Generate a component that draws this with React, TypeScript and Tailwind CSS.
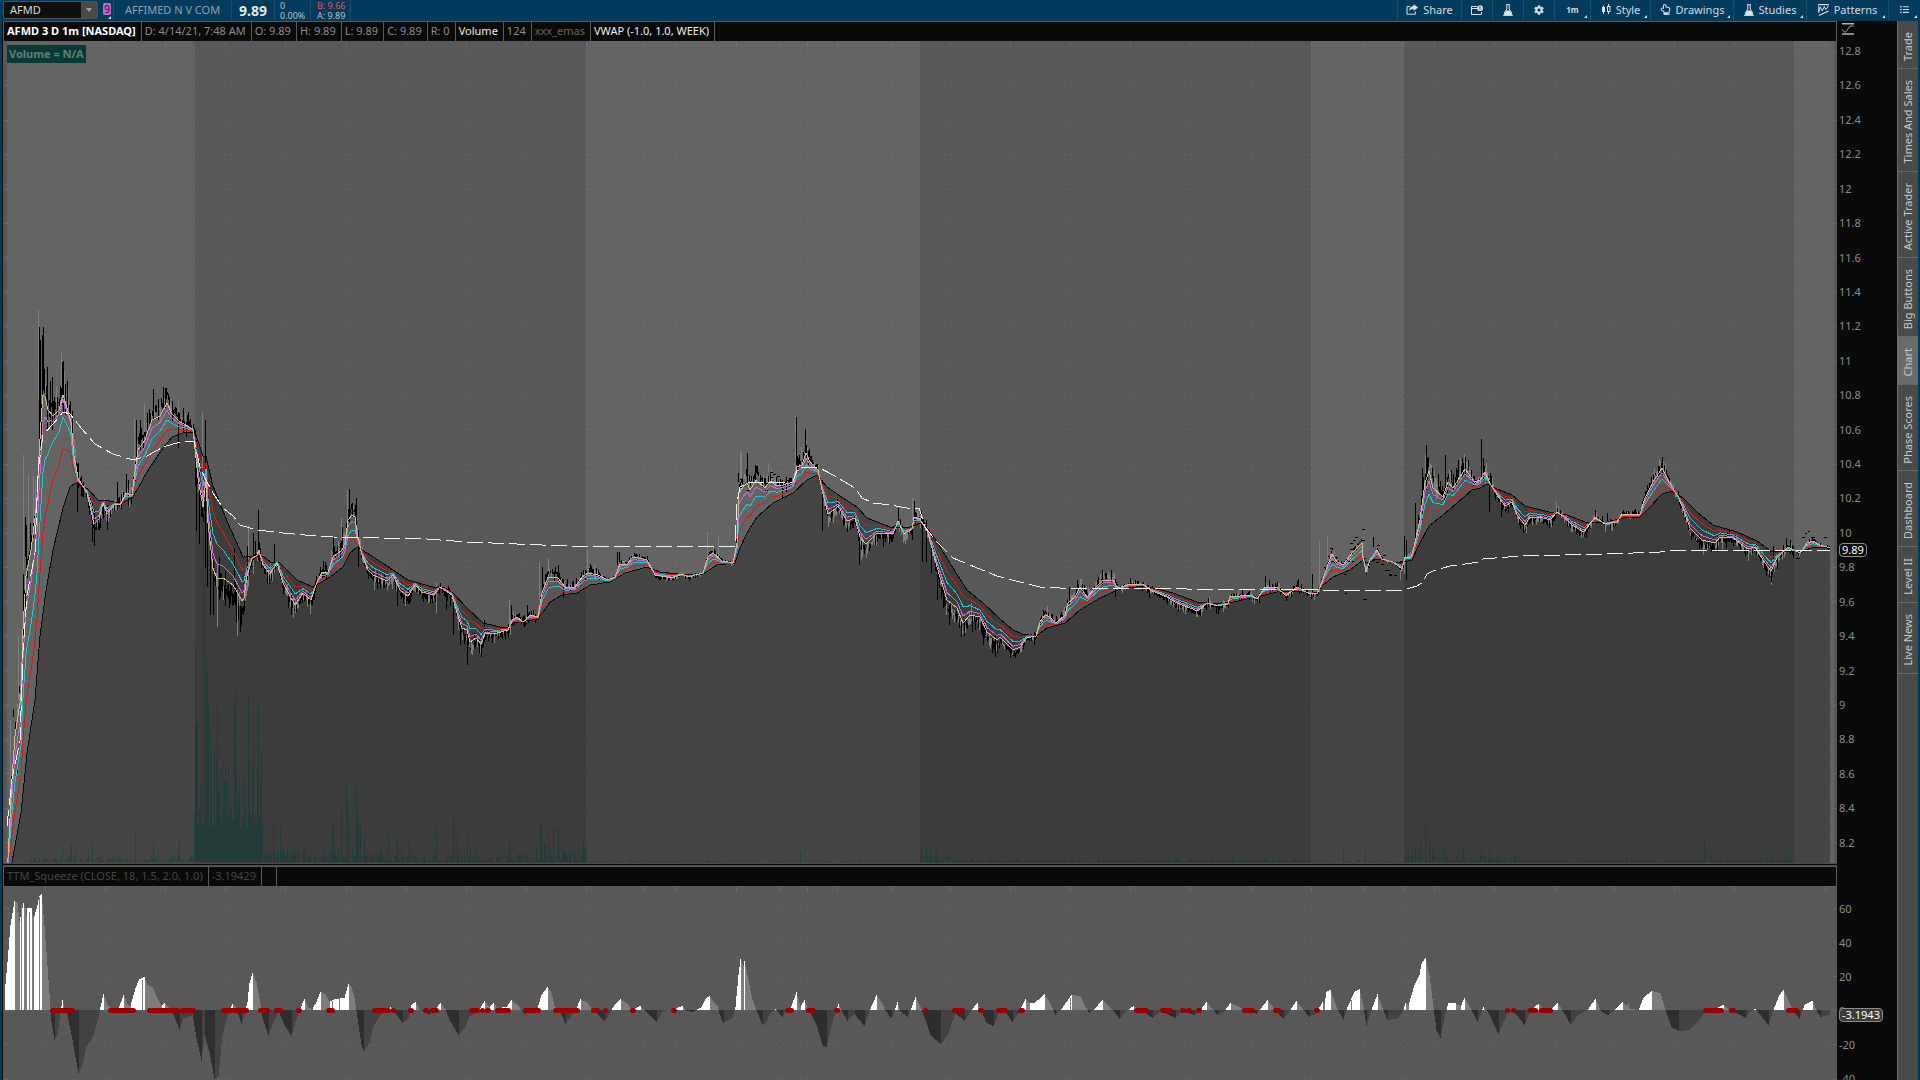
import React, { useState } from "react";
import { FaCog, FaRegHandPointUp, FaListUl } from "react-icons/fa";

type Pt = [number, number];

const TABS = [
  "Trade",
  "Times And Sales",
  "Active Trader",
  "Big Buttons",
  "Chart",
  "Phase Scores",
  "Dashboard",
  "Level II",
  "Live News",
];

// x, y pairs in chart space
const FAST =
  "7 862 8 858 12 779 15 736 21 696 23 629 26 576 31 550 33 535 37 501 39 456 41 422 43 395 45 397 48 410 53 416 59 410 63 395 67 408 71 422 74 456 78 478 87 493 94 524 99 519 103 503 107 514 115 504 120 505 126 493 132 495 135 471 138 450 145 440 152 420 160 416 167 403 172 414 180 422 193 429 198 478 203 507 206 478 208 523 213 568 217 579 223 578 233 585 242 601 244 598 247 576 252 559 257 555 259 550 263 565 270 574 277 563 283 583 295 605 303 593 311 600 317 582 322 572 328 572 333 557 342 550 345 543 348 520 352 515 355 517 357 532 362 555 368 570 373 575 387 581 393 575 400 590 408 596 415 585 422 592 434 595 440 587 452 595 457 613 462 628 467 630 470 642 476 638 481 644 485 634 497 633 508 630 512 620 517 617 523 622 530 615 538 617 542 593 548 577 558 578 565 587 575 587 582 577 588 573 598 575 608 580 615 577 620 564 627 564 633 557 647 560 655 575 672 578 682 574 688 577 703 573 708 557 713 553 722 561 733 563 737 543 739 493 743 487 747 483 750 490 756 480 765 488 770 481 777 486 783 485 793 482 797 467 802 465 806 453 810 462 818 470 822 490 828 514 835 509 838 506 847 521 855 518 860 537 866 544 877 533 893 534 898 521 904 534 912 529 914 517 920 519 928 533 937 567 947 600 957 608 963 623 970 615 980 617 987 632 997 640 1000 637 1013 650 1020 647 1027 638 1036 636 1040 622 1045 615 1050 617 1056 623 1065 615 1068 603 1075 597 1080 587 1087 597 1095 588 1103 580 1113 580 1118 588 1130 584 1143 584 1150 590 1167 597 1177 603 1198 611 1207 603 1217 606 1228 604 1230 597 1250 595 1257 599 1265 587 1277 587 1286 596 1297 587 1308 593 1317 594 1322 582 1327 567 1332 554 1337 562 1343 565 1353 552 1362 543 1363 557 1366 572 1370 560 1377 550 1382 559 1393 562 1402 569 1405 557 1411 557 1414 547 1420 520 1425 483 1429 471 1433 488 1443 497 1448 482 1453 488 1460 477 1465 469 1475 482 1480 480 1485 472 1490 483 1497 495 1505 506 1512 502 1517 515 1525 525 1530 517 1543 518 1550 520 1557 512 1563 516 1572 525 1584 532 1595 517 1605 524 1617 522 1622 514 1640 514 1645 498 1653 482 1662 468 1668 480 1677 495 1683 508 1690 528 1702 540 1715 543 1720 537 1733 538 1748 549 1755 547 1765 563 1771 571 1777 558 1788 547 1800 553 1807 543 1813 541 1820 545 1830 548";

const SLOW =
  "7 880 12 862 21 813 27 753 35 700 40 636 46 591 53 550 63 508 70 487 75 483 88 489 98 500 110 501 121 504 133 497 147 472 163 448 172 437 183 433 195 432 203 456 206 456 213 486 227 521 243 557 263 556 271 562 279 562 297 580 313 587 320 583 330 577 343 567 350 553 357 547 367 553 387 566 408 580 433 587 445 588 453 593 467 608 483 623 500 627 508 628 513 623 538 619 550 602 562 595 577 593 590 585 610 582 625 573 647 567 660 572 687 575 703 574 717 565 735 563 740 548 747 533 757 517 773 503 793 493 807 480 817 475 827 487 843 498 857 507 867 518 890 527 910 527 920 523 928 529 937 542 953 568 967 590 983 603 1000 619 1013 630 1022 634 1036 636 1047 628 1065 623 1080 610 1100 598 1120 589 1143 586 1153 588 1173 593 1197 602 1217 604 1233 602 1257 597 1277 592 1293 591 1317 593 1323 585 1333 577 1350 570 1363 560 1367 563 1377 559 1400 563 1412 560 1418 547 1429 526 1443 515 1457 503 1472 490 1480 488 1487 484 1497 489 1512 495 1525 506 1553 513 1567 515 1585 522 1607 522 1623 518 1640 517 1650 507 1662 494 1672 491 1683 498 1697 512 1713 525 1737 532 1757 541 1772 552 1790 551 1802 552 1813 547 1830 547";

const VWAP =
  "7 826 12 779 20 741 23 651 27 595 35 553 38 471 43 435 53 424 63 412 70 414 82 429 95 444 113 454 133 460 147 456 163 447 180 442 194 441 200 467 205 478 213 493 223 508 233 516 240 525 257 530 283 533 305 535 333 537 427 539 467 542 567 546 735 546 737 503 740 487 747 483 793 482 798 468 818 467 833 475 855 488 862 498 873 503 890 505 907 508 919 508 925 527 937 542 953 558 970 565 997 576 1020 582 1040 587 1060 588 1150 588 1187 589 1310 589 1327 591 1403 590 1417 586 1423 582 1427 574 1433 571 1450 566 1480 562 1483 559 1520 556 1563 555 1607 554 1660 552 1680 550 1830 550";

const SQUEEZE =
  "4 0 5 26 7 48 10 85 14 109 17 107 19 88 23 107 26 95 27 102 31 102 33 90 37 105 39 114 41 116 44 85 48 30 50 2 51 -12 54 -30 57 -25 60 -3 62 10 64 2 67 -5 71 -25 78 -63 82 -55 86 -36 92 -27 98 -8 100 3 103 16 107 5 111 1 118 1 123 15 127 6 130 4 135 22 139 31 144 33 147 25 152 23 157 12 161 4 164 7 169 2 173 -5 179 -19 183 -8 187 -8 192 -4 196 -28 201 -51 204 -25 209 -42 214 -69 218 -66 222 -25 227 -6 232 6 235 4 238 -5 241 -14 244 -5 247 8 249 27 252 37 256 28 260 5 262 -8 268 -26 273 -12 278 -1 284 -15 291 -26 295 -12 299 0 304 11 308 2 312 1 316 8 320 18 325 16 329 8 335 11 344 12 348 26 351 23 354 12 357 -8 361 -35 363 -41 369 -33 373 -16 382 -2 390 3 394 -2 402 -13 408 -8 411 5 415 8 419 1 429 -5 435 1 440 7 445 1 449 -10 458 -25 464 -18 469 -7 478 -1 484 9 489 3 493 7 497 2 506 3 511 10 518 4 524 -4 531 -1 537 1 541 15 547 23 551 17 554 4 559 0 565 -14 571 -6 576 2 580 11 587 7 591 1 598 -5 604 -11 610 -2 614 5 620 11 627 6 631 0 640 4 645 -1 656 -12 662 -1 671 0 682 4 686 -1 693 -2 701 3 705 11 709 14 713 8 717 4 719 -4 723 -13 732 -8 735 3 738 35 740 51 743 44 744 49 748 30 752 10 756 0 762 -15 765 -13 769 -4 775 1 782 -7 785 -1 790 1 796 18 800 3 804 10 807 2 811 -5 816 -15 822 -35 826 -37 830 -20 835 -2 838 6 842 -2 847 -11 854 -4 864 -16 869 -1 876 15 881 8 885 -1 891 -8 894 -1 897 8 900 -1 907 -7 911 2 915 13 921 1 925 -10 930 -25 940 -34 947 -26 951 -14 955 -3 964 -11 971 0 977 7 981 -1 986 -13 993 -16 999 -2 1005 -2 1012 -12 1019 -1 1025 11 1029 7 1034 7 1040 12 1044 16 1049 8 1055 -5 1061 1 1071 15 1080 14 1085 3 1089 -3 1094 1 1102 10 1109 3 1113 -1 1119 -9 1126 -1 1133 4 1140 0 1152 -8 1160 -1 1175 -8 1181 -1 1194 -5 1200 0 1206 8 1213 0 1217 -5 1224 -1 1230 7 1242 1 1251 -1 1256 -4 1260 1 1267 10 1274 1 1283 -9 1290 0 1296 9 1303 0 1309 -7 1316 -3 1322 8 1324 6 1326 18 1330 20 1336 3 1343 -10 1347 3 1354 18 1359 21 1363 3 1366 -16 1371 0 1377 16 1382 2 1387 -10 1398 -8 1403 0 1405 7 1408 5 1414 25 1419 35 1421 46 1425 52 1429 35 1433 3 1436 -20 1440 -28 1445 -3 1448 7 1455 7 1460 3 1464 12 1469 4 1477 -12 1483 3 1487 -1 1498 -24 1507 -3 1513 -1 1524 -15 1530 0 1538 6 1544 -1 1551 1 1557 7 1563 -2 1570 -14 1578 -5 1587 0 1595 11 1601 -2 1608 -5 1615 1 1622 8 1630 1 1638 0 1643 12 1651 19 1660 17 1665 0 1671 -17 1678 -21 1689 -20 1698 -11 1704 -2 1715 1 1723 5 1730 0 1745 -8 1750 -1 1755 1 1760 -5 1768 -15 1773 0 1779 15 1783 20 1791 3 1799 -9 1804 5 1812 9 1816 0 1820 -7 1829 -5";

// stretches where the squeeze is on
const SQUEEZE_ON =
  "50 75 108 136 147 180 180 196 221 249 258 270 274 283 296 302 326 335 372 391 391 396 408 414 423 429 430 439 469 480 480 485 485 491 495 511 523 541 553 580 591 600 603 608 630 636 671 677 785 794 806 816 834 840 923 928 952 965 978 984 996 1008 1018 1025 1134 1149 1160 1173 1180 1186 1186 1192 1196 1202 1242 1255 1273 1281 1314 1320 1505 1510 1511 1516 1528 1538 1539 1553 1703 1724 1729 1736 1786 1799";

// x, high, low, up (1) or down (0)
const WICKS =
  "39 327 450 0 40 340 430 0 43 327 390 0 42 335 395 0 38 310 400 1 47 367 430 0 50 381 425 0 52 377 430 0 63 361 412 0 62 362 405 0 65 384 415 0 61 352 410 1 23 455 570 1 25 517 557 0 26 525 557 0 30 523 550 0 28 474 540 1 33 476 540 1 35 480 530 1 23 574 617 0 19 686 693 0 13 709 717 0 17 766 773 0 18 636 700 1 10 720 800 1 77 470 512 0 92 500 542 0 94 510 546 0 107 505 530 0 117 482 510 0 126 474 495 0 128 480 506 0 136 420 460 0 134 418 480 1 140 420 450 0 144 403 440 1 153 389 420 0 158 399 420 0 163 387 410 0 165 388 408 0 178 412 448 0 183 408 432 0 195 430 486 0 196 440 531 0 199 460 544 0 202 412 500 1 205 420 568 0 207 500 587 0 210 540 615 0 213 560 615 0 217 570 627 1 219 557 600 0 225 570 606 0 234 548 590 0 236 585 623 0 237 590 636 1 247 546 580 0 248 525 570 1 253 533 560 0 258 510 560 0 274 544 565 0 291 590 615 0 349 489 515 0 347 490 520 1 356 498 530 0 342 527 545 0 341 518 545 1 333 538 555 0 358 530 567 0 397 585 606 0 408 590 604 0 436 595 613 1 446 590 610 0 453 600 635 0 460 625 645 0 467 630 665 0 479 640 653 0 484 620 640 0 509 600 628 1 511 605 625 0 527 605 618 0 539 562 600 1 542 567 595 0 548 558 580 1 558 565 580 0 563 585 598 0 587 550 575 1 596 568 576 0 617 552 565 0 619 552 562 0 707 532 556 1 718 536 558 1 740 451 490 1 741 453 490 1 738 473 482 0 747 453 485 0 755 465 480 0 768 463 472 1 782 480 499 0 796 417 465 0 795 415 460 1 801 447 465 1 805 429 455 0 806 445 460 0 822 480 531 0 837 497 510 0 859 530 565 0 861 535 560 1 898 508 525 0 914 501 520 0 912 498 520 1 922 520 562 0 926 530 562 0 931 535 573 0 937 560 600 0 943 590 608 0 949 605 625 0 964 620 636 0 983 620 645 0 971 603 615 1 1010 645 656 0 1043 610 618 0 1069 587 605 0 1077 580 590 0 1102 570 585 0 1111 570 582 0 1115 580 597 0 1197 608 617 1 1265 576 588 0 1298 579 590 0 1312 574 592 0 1319 541 585 1 1327 536 560 1 1373 537 547 0 1404 536 560 0 1406 540 580 0 1400 565 580 1 1415 503 540 0 1422 468 520 0 1426 445 490 0 1425 455 490 1 1427 458 480 0 1436 478 500 1 1445 455 490 0 1460 458 480 1 1465 460 475 0 1481 439 480 0 1483 458 480 0 1489 480 512 0 1501 500 517 0 1523 520 533 0 1556 502 512 1 1607 513 522 0 1659 459 470 1 1662 462 475 0 1699 535 549 0 1703 540 555 1 1771 570 582 0 1773 546 565 0 1786 538 548 0";

const VOLUME_SPIKES =
  "195 216 196 139 197 139 203 390 205 300 206 203 207 190 208 160 210 135 217 160 219 90 225 97 228 95 235 173 234 155 236 96 244 82 248 167 253 120 257 95 258 157 260 80 262 40 273 38 280 35 332 35 333 37 341 58 346 79 347 62 349 42 356 75 357 50 358 43 360 37 364 20 388 28 397 23 409 22 436 36 453 45 457 27 467 32 470 15 509 20 540 38 541 38 548 29 553 33 558 35 583 22 586 20 800 10 921 16 926 14 930 12 936 10 1044 7 1415 16 1420 22 1425 40 1429 25 1433 18 1444 16 1463 14 1481 12 1489 10 1704 19 1711 8 1772 8 1788 9 135 28 153 25 71 18 62 16 92 20 179 22 1343 14 1365 10";

const GRID_X = [
  45, 105, 165, 225, 285, 346, 406, 466, 526, 586, 643, 676, 736, 780, 807, 837, 892, 950, 1010, 1070,
  1130, 1190, 1251, 1311, 1363, 1403, 1434, 1494, 1555, 1614, 1674, 1734, 1825,
];

const BANDS: Pt[] = [
  [7, 195],
  [586, 920],
  [1311, 1404],
  [1794, 1834],
];

const PRICES = Array.from({ length: 24 }, (_, i) => 12.8 - i * 0.2);

const nums = (s: string) => s.split(" ").map(Number);

const group = (s: string, n: number) => {
  const all = nums(s);
  const out: number[][] = [];
  for (let i = 0; i < all.length; i += n) out.push(all.slice(i, i + n));
  return out;
};

const at = (pts: number[][], x: number) => {
  for (let i = 1; i < pts.length; i++) {
    const [x0, y0] = pts[i - 1];
    const [x1, y1] = pts[i];
    if (x <= x1) return y0 + ((x - x0) / (x1 - x0)) * (y1 - y0);
  }
  return pts[pts.length - 1][1];
};

const random = (seed: number) => {
  let s = seed;
  return () => {
    s = (s * 16807) % 2147483647;
    return s / 2147483647;
  };
};

const priceY = (p: number) => 51 + (12.8 - p) * 172;

const fastPts = group(FAST, 2);
const slowPts = group(SLOW, 2);

// the averages bunch up behind the first spike
const BUNCHING = [
  [0, 1],
  [40, 1],
  [46, 1.4],
  [53, 1.9],
  [70, 1.9],
  [78, 1],
  [1900, 1],
];

const blend = (k: number) => {
  let d = "";
  for (let x = 7; x <= 1830; x++) {
    const f = at(fastPts, x);
    const y = f + (at(slowPts, x) - f) * Math.pow(k, at(BUNCHING, x));
    d += `${x === 7 ? "M" : "L"}${x} ${y.toFixed(1)}`;
  }
  return d;
};

const amplitude = (x: number) => {
  if (x < 30) return 16;
  if (x < 75) return 15;
  if (x < 200) return 11;
  if (x < 260) return 17;
  if (x < 350) return 9;
  if (x < 480) return 8;
  if (x < 600) return 6;
  if (x < 735) return 2;
  if (x < 920) return 7;
  if (x < 1000) return 9;
  if (x < 1320) return 5;
  if (x < 1404) return 1;
  if (x < 1500) return 10;
  if (x < 1700) return 5;
  if (x < 1794) return 6;
  return 2;
};

const candles = () => {
  const rnd = random(77);
  let up = "";
  let down = "";
  let rising = true;
  for (let x = 8; x < 1830; x++) {
    const f = at(fastPts, x);
    const lead = f - at(slowPts, x);
    const mid = f + Math.max(-9, Math.min(9, lead * 0.22));
    const a = amplitude(x);
    const top = mid - a * rnd() * rnd() * 1.6;
    const bottom = mid + a * rnd() * rnd() * 1.6;
    const bar = `M${x}.5 ${top.toFixed(0)}V${(bottom + 1).toFixed(0)}`;
    if (rnd() < (rising ? 0.55 : 0.35)) rising = !rising;
    if (rising) up += bar;
    else down += bar;
  }
  group(WICKS, 4).forEach(([x, hi, lo, isUp]) => {
    const bar = `M${x}.5 ${hi}V${lo}`;
    if (isUp) up += bar;
    else down += bar;
  });
  // thin extended-hours prints
  for (let i = 0; i < 34; i++) {
    const x = 1320 + Math.floor(rnd() * 82);
    down += `M${x} ${Math.floor(at(fastPts, x) - 14 + rnd() * 30)}.5h3`;
  }
  for (let i = 0; i < 12; i++) {
    const x = 740 + Math.floor(rnd() * 55);
    down += `M${x} ${Math.floor(472 + rnd() * 24)}.5h3`;
  }
  down += "M1802 537.5h3M1808 531.5h2M1811 537.5h4M1824 537.5h3M1796 558.5h4M1805 533.5h2M1345 593.5h2M1363 599.5h4";
  return { up, down };
};

const volumeLevel = (x: number) => {
  if (x < 194) return 9;
  if (x < 262) return 85;
  if (x < 290) return 22;
  if (x < 330) return 18;
  if (x < 365) return 26;
  if (x < 385) return 14;
  if (x < 536) return 11;
  if (x < 586) return 19;
  if (x < 920) return 2;
  if (x < 950) return 11;
  if (x < 1311) return 4;
  if (x < 1404) return 2;
  if (x < 1460) return 13;
  if (x < 1530) return 8;
  if (x < 1794) return 4;
  return 1;
};

const volume = () => {
  const rnd = random(4211);
  let d = "";
  for (let x = 30; x < 1830; x++) {
    const level = volumeLevel(x);
    const floor = x >= 194 && x < 262 ? 32 : 0;
    const h = floor + level * rnd() * rnd() + 0.4;
    if (h >= 1) d += `M${x}.5 862v-${h.toFixed(0)}`;
  }
  group(VOLUME_SPIKES, 2).forEach(([x, h]) => {
    d += `M${x}.5 862v-${h}`;
  });
  return d;
};

const histogram = () => {
  const pts = group(SQUEEZE, 2);
  const out = { rise: "", fade: "", drop: "", lift: "" };
  let prev = 0;
  for (let x = 5; x < 1830; x++) {
    const v = at(pts, x);
    const bar = `M${x}.5 1010v${(-v).toFixed(0)}`;
    if (v >= 0 && v >= prev) out.rise += bar;
    else if (v >= 0) out.fade += bar;
    else if (v < prev) out.drop += bar;
    else out.lift += bar;
    prev = v;
  }
  return out;
};

const bars = candles();
const volumePath = volume();
const hist = histogram();
const slowPath = blend(1);

const PriceChart: React.FC = () => (
  <svg
    className="block h-full w-full"
    viewBox="3 41 1834 822"
    preserveAspectRatio="none"
    role="img"
    aria-label="AFMD price"
  >
    <rect x="3" y="41" width="1834" height="822" fill="#585858" />
    {BANDS.map(([a, b]) => (
      <rect key={a} x={a} y="41" width={b - a} height="822" fill="#646464" />
    ))}
    <g stroke="#fff" strokeOpacity="0.09" shapeRendering="crispEdges">
      {GRID_X.map((x) => (
        <path key={x} d={`M${x}.5 42v5`} />
      ))}
      {GRID_X.map((x) => (
        <path key={`d${x}`} d={`M${x}.5 51V862`} strokeDasharray="1 5" />
      ))}
      {PRICES.map((p) => (
        <path key={p} d={`M8 ${Math.round(priceY(p))}.5H1830`} strokeDasharray="1 5" />
      ))}
      {PRICES.map((p) => (
        <path key={`t${p}`} d={`M1833 ${Math.round(priceY(p))}.5h4M4 ${Math.round(priceY(p))}.5h4`} />
      ))}
    </g>
    <path d={`${slowPath}V863H7Z`} fill="#000" fillOpacity="0.31" />
    <path d={volumePath} stroke="#003c38" strokeOpacity="0.42" fill="none" shapeRendering="crispEdges" />
    <g fill="none" shapeRendering="crispEdges">
      <path d={bars.up} stroke="#808080" />
      <path d={bars.down} stroke="#000" />
    </g>
    <g fill="none" strokeLinejoin="round" shapeRendering="crispEdges">
      <path d={slowPath} stroke="#0a0a0a" />
      <path d={blend(0.68)} stroke="#d01c1c" />
      <path d={blend(0.42)} stroke="#1fc7c7" />
      <path d={blend(0.18)} stroke="#cf66d4" />
      <path d={blend(0)} stroke="#cdbb95" />
      <path
        d={`M${group(VWAP, 2).map((p) => p.join(" ")).join("L")}`}
        stroke="#f2f2f2"
        strokeDasharray="16 5"
      />
    </g>
  </svg>
);

const SqueezeChart: React.FC = () => (
  <svg
    className="block h-full w-full"
    viewBox="3 886 1834 194"
    preserveAspectRatio="none"
    role="img"
    aria-label="TTM squeeze"
  >
    <rect x="3" y="886" width="1834" height="194" fill="#585858" />
    <g stroke="#fff" strokeOpacity="0.09" shapeRendering="crispEdges">
      {GRID_X.map((x) => (
        <path key={x} d={`M${x}.5 887v5`} />
      ))}
      {GRID_X.map((x) => (
        <path key={`d${x}`} d={`M${x}.5 897V1080`} strokeDasharray="1 5" />
      ))}
      {[908, 942, 976, 1010, 1044, 1079].map((y) => (
        <path key={y} d={`M8 ${y}.5H1830`} strokeDasharray="1 5" />
      ))}
      {[908, 942, 976, 1010, 1044, 1079].map((y) => (
        <path key={`t${y}`} d={`M1833 ${y}.5h4M4 ${y}.5h4`} />
      ))}
    </g>
    <g fill="none" shapeRendering="crispEdges">
      <path d={hist.rise} stroke="#fff" />
      <path d={hist.fade} stroke="#7d7d7d" />
      <path d={hist.drop} stroke="#2e2e2e" />
      <path d={hist.lift} stroke="#424242" />
      <path
        d="M18.5 1010V912M21.5 1010V905M25.5 1010V908M29.5 1010V912M33.5 1010V918M39.5 1010V897M142.500 1010V980M149.500 1010V987M153.500 1010V990M254.500 1010V978M349.500 1010V985M332.500 1010V1001M339.500 1010V998M548.500 1010V988"
        stroke="#7d7d7d"
      />
      <path d="M1070.5 1010V998M1074.5 1010V998M1077.5 1010V998M1628.500 1010V1003M1653.500 1010V993M1351.500 1010V1000" stroke="#7d7d7d" />
    </g>
    <g fill="#9b0000">
      {group(SQUEEZE_ON, 2).map(([a, b]) => (
        <rect key={a} x={a} y="1008" width={b - a} height="5" rx="2.5" />
      ))}
    </g>
  </svg>
);

const Flask = () => (
  <svg width="10" height="12" viewBox="0 0 10 12" fill="none" stroke="#dce4e9">
    <path d="M3 .7h4M3.8 1v4L1.2 9.2M6.2 1v4l2.6 4.2" />
    <path d="M3.3 6.4h3.4L9 9.6v1.9H1V9.6Z" fill="#dce4e9" stroke="none" />
    <path d="M0 11.3h10" />
  </svg>
);

const ShareIcon = () => (
  <svg width="12" height="11" viewBox="0 0 12 11" fill="none" stroke="#dce4e9">
    <path d="M4 2.5H1v7.7h8.3V7.5" />
    <path d="M7.5 0 12 3.5 7.5 7V5C5.5 4.9 4 5.5 2.9 7.5 3 4.3 4.6 2.3 7.5 2Z" fill="#dce4e9" stroke="none" />
  </svg>
);

const CardIcon = () => (
  <svg width="12" height="10" viewBox="0 0 12 10" fill="none" stroke="#dce4e9">
    <path d="M6 1.5H.5v8h10V7" />
    <path d="M1 3.5h5" />
    <circle cx="9" cy="3.2" r="2.9" fill="#dce4e9" stroke="none" />
    <path d="M9 1.3v2.4M9 4.4v.9" stroke="#023b5b" />
  </svg>
);

const StyleIcon = () => (
  <svg width="10" height="11" viewBox="0 0 10 11" fill="none" stroke="#dce4e9">
    <path d="M2.5 1.5v8.5M7.5 0v2M7.5 8v2" />
    <rect x="1" y="3" width="3" height="5" fill="#dce4e9" stroke="none" />
    <rect x="6.5" y="2.5" width="2.5" height="5" />
  </svg>
);

const PatternIcon = () => (
  <svg width="11" height="12" viewBox="0 0 11 12" fill="none" stroke="#dce4e9">
    <path d="M0 .7h11M1 11.5 10.5 7" strokeWidth="1.2" />
    <path d="m.8 7.5 1.5-4.5 2 4 2-4.5 1.5 3L10.5 2" />
    <path d="M.8 2v7" />
  </svg>
);

const Corner = () => (
  <svg className="absolute right-[3px] bottom-[3px]" width="3" height="3" viewBox="0 0 3 3">
    <path d="M3 0v3H0Z" fill="#dce4e9" />
  </svg>
);

const ToolButton: React.FC<{
  label: string;
  width: string;
  icon?: React.ReactNode;
  text?: string;
  menu?: boolean;
}> = ({ label, width, icon, text, menu }) => (
  <button
    aria-label={label}
    className={`relative flex h-full shrink-0 items-center justify-center gap-[5px] border-l border-[#1b4e6c] pb-[2px] text-[#d3dbe0] ${width}`}
  >
    {icon}
    {text && <span>{text}</span>}
    {menu && <Corner />}
  </button>
);

const Cell: React.FC<{ children?: React.ReactNode; tone?: string }> = ({ children, tone = "text-[#8c8c8c]" }) => (
  <span
    className={`flex h-full items-center border-r border-[#5a5a5a] pr-[5px] pb-[2px] pl-[3px] whitespace-nowrap ${tone}`}
  >
    {children}
  </span>
);

const TopBar: React.FC = () => {
  const [symbol, setSymbol] = useState("AFMD");
  return (
    <header className="flex h-[21px] shrink-0 items-stretch justify-between bg-[#023b5b] text-[11px] leading-[14px]">
      <div className="flex items-stretch">
        <div className="mt-px mb-[2px] ml-[3px] flex w-[95px] rounded-[2px] border border-[#505050] bg-[#101010]">
          <input
            aria-label="Symbol"
            value={symbol}
            onChange={(e) => setSymbol(e.target.value)}
            className="w-full min-w-0 flex-1 bg-transparent pl-[6px] text-[#dadada] outline-none"
          />
          <button aria-label="Recent symbols" className="flex w-[16px] items-center justify-center bg-[#4a4a4a]">
            <svg width="6" height="4" viewBox="0 0 6 4">
              <path d="M0 0h6L3 4Z" fill="#a0a0a0" />
            </svg>
          </button>
        </div>
        <button aria-label="Link group" className="relative flex w-[15px] items-start pt-[3px] pl-[5px]">
          <span className="flex h-[12px] w-[8px] items-center justify-center rounded-[2px] bg-[#c565cf] text-[10px] leading-[12px] text-[#2b1030]">
            9
          </span>
          <svg className="absolute right-[2px] bottom-[2px]" width="3" height="3" viewBox="0 0 3 3">
            <path d="M3 0v3H0Z" fill="#dce4e9" />
          </svg>
        </button>
        <span className="flex w-[118px] items-center border-l border-[#1b4e6c] pb-[2px] pl-[11px] whitespace-nowrap text-[#8fa0ac]">
          AFFIMED N V COM
        </span>
        <span className="flex w-[43px] items-center border-l border-[#1b4e6c] pl-[7px] text-[14px] font-bold text-[#e2e6e9]">
          9.89
        </span>
        <span className="flex w-[36px] flex-col justify-center border-l border-[#1b4e6c] pl-[5px] text-[9px] leading-[10px] text-[#b9c2c8]">
          <span>0</span>
          <span>0.00%</span>
        </span>
        <span className="flex w-[41px] flex-col justify-center border-x border-[#1b4e6c] pl-[6px] text-[9px] leading-[10px] whitespace-nowrap">
          <span className="text-[#e0555f]">B: 9.66</span>
          <span className="text-[#b9c2c8]">A: 9.89</span>
        </span>
      </div>
      <nav className="flex items-stretch">
        <ToolButton label="Share" width="w-[64px]" icon={<ShareIcon />} text="Share" />
        <ToolButton label="Notes" width="w-[31px]" icon={<CardIcon />} />
        <ToolButton label="Edit studies" width="w-[31px]" icon={<Flask />} />
        <ToolButton label="Settings" width="w-[31px]" icon={<FaCog size={10} />} />
        <ToolButton
          label="Timeframe"
          width="w-[36px]"
          icon={<span className="text-[8px] font-bold">1m</span>}
          menu
        />
        <ToolButton label="Style" width="w-[60px]" icon={<StyleIcon />} text="Style" menu />
        <ToolButton label="Drawings" width="w-[83px]" icon={<FaRegHandPointUp size={11} />} text="Drawings" menu />
        <ToolButton label="Studies" width="w-[73px]" icon={<Flask />} text="Studies" menu />
        <ToolButton label="Patterns" width="w-[82px]" icon={<PatternIcon />} text="Patterns" menu />
        <ToolButton label="More" width="w-[32px]" icon={<FaListUl size={9} />} menu />
      </nav>
    </header>
  );
};

export default function App() {
  const [activeTab, setActiveTab] = useState("Chart");

  return (
    <div className="flex h-screen flex-col overflow-hidden bg-[#0a0a0a] font-['Noto_Sans','Open_Sans',sans-serif] text-[11px] leading-[14px]">
      <TopBar />
      <div className="flex min-h-0 flex-1 border-x-2 border-r-[#023b5b] border-l-[#023b5b]">
        <main className="flex min-w-0 flex-1 flex-col pl-px">
          <div className="flex h-[20px] shrink-0">
            <div className="flex min-w-0 flex-1 items-stretch border-t border-r border-l border-[#5a5a5a]">
              <Cell tone="font-bold text-white">AFMD 3 D 1m [NASDAQ]</Cell>
              <Cell>D: 4/14/21, 7:48 AM</Cell>
              <Cell>O: 9.89</Cell>
              <Cell>H: 9.89</Cell>
              <Cell>L: 9.89</Cell>
              <Cell>C: 9.89</Cell>
              <Cell>R: 0</Cell>
              <Cell tone="text-[#ededed]">Volume</Cell>
              <Cell>124</Cell>
              <Cell tone="text-[#6b6553]">xxx_emas</Cell>
              <Cell tone="text-[#ededed]">VWAP (-1.0, 1.0, WEEK)</Cell>
            </div>
            <div className="w-[60px] pt-[2px] pl-[5px]">
              <svg width="12" height="12" viewBox="0 0 12 12" fill="none" stroke="#b4b4b4">
                <path d="M0 .7h12M0 11h12" strokeWidth="1.4" />
                <path d="M.5 6.5C2 10 4 9.500 5.500 6.500S9 2.500 11.500 3" />
              </svg>
            </div>
          </div>
          <div className="flex min-h-0 flex-[822]">
            <div className="relative min-w-0 flex-1">
              <PriceChart />
              <span className="absolute top-[4px] left-[4px] bg-[#053a37] px-[2px] py-[2px] font-bold text-[#6b7a78]">
                Volume = N/A
              </span>
            </div>
            <div className="relative flex w-[60px] flex-col justify-between pt-[3px] pb-[13px] pl-[2px] text-[#8c8c8c]">
              {PRICES.map((p) => (
                <span key={p}>{Number(p.toFixed(1))}</span>
              ))}
              <span
                className="absolute left-[2px] -translate-y-1/2 rounded-[4px] border border-[#8c8c8c] bg-[#0a0a0a] px-[2px] leading-[12px] text-white"
                style={{ top: `${((priceY(9.9) - 41) / 822) * 100}%` }}
              >
                9.89
              </span>
            </div>
          </div>
          <div className="mr-[60px] h-[3px] shrink-0 border-t border-b border-[#4a4a4a]" />
          <div className="mr-[60px] flex h-[20px] shrink-0 items-stretch border-t border-r border-l border-[#5a5a5a]">
            <Cell tone="text-[#454545]">TTM_Squeeze (CLOSE, 18, 1.5, 2.0, 1.0)</Cell>
            <Cell tone="text-[#454545]">-3.19429</Cell>
            <span className="w-[15px] border-r border-[#5a5a5a]" />
          </div>
          <div className="flex min-h-0 flex-[194]">
            <div className="min-w-0 flex-1">
              <SqueezeChart />
            </div>
            <div className="relative w-[60px] overflow-hidden pt-[6px] pl-[2px] text-[#8c8c8c]">
              {[60, 40, 20, 0, -20, -40].map((v) => (
                <span key={v} className="flex h-[34px] items-center">
                  {v}
                </span>
              ))}
              <span className="absolute top-[122px] left-[2px] rounded-[4px] border border-[#8c8c8c] bg-[#3a3a3a] px-[2px] leading-[12px] text-white">
                -3.1943
              </span>
            </div>
          </div>
        </main>
        <aside className="flex w-[21px] shrink-0 flex-col border-l border-[#6a6a6a] bg-[#4a4a4a]">
          {TABS.map((tab) => (
            <button
              key={tab}
              onClick={() => setActiveTab(tab)}
              className={`flex items-center justify-center border-b border-[#666] pt-[11px] pb-[7px] text-[#c9c9c9] ${
                tab === activeTab ? "bg-[#6b6b6b]" : ""
              }`}
            >
              <span className="rotate-180 whitespace-nowrap [writing-mode:vertical-rl]">{tab}</span>
            </button>
          ))}
        </aside>
      </div>
    </div>
  );
}
